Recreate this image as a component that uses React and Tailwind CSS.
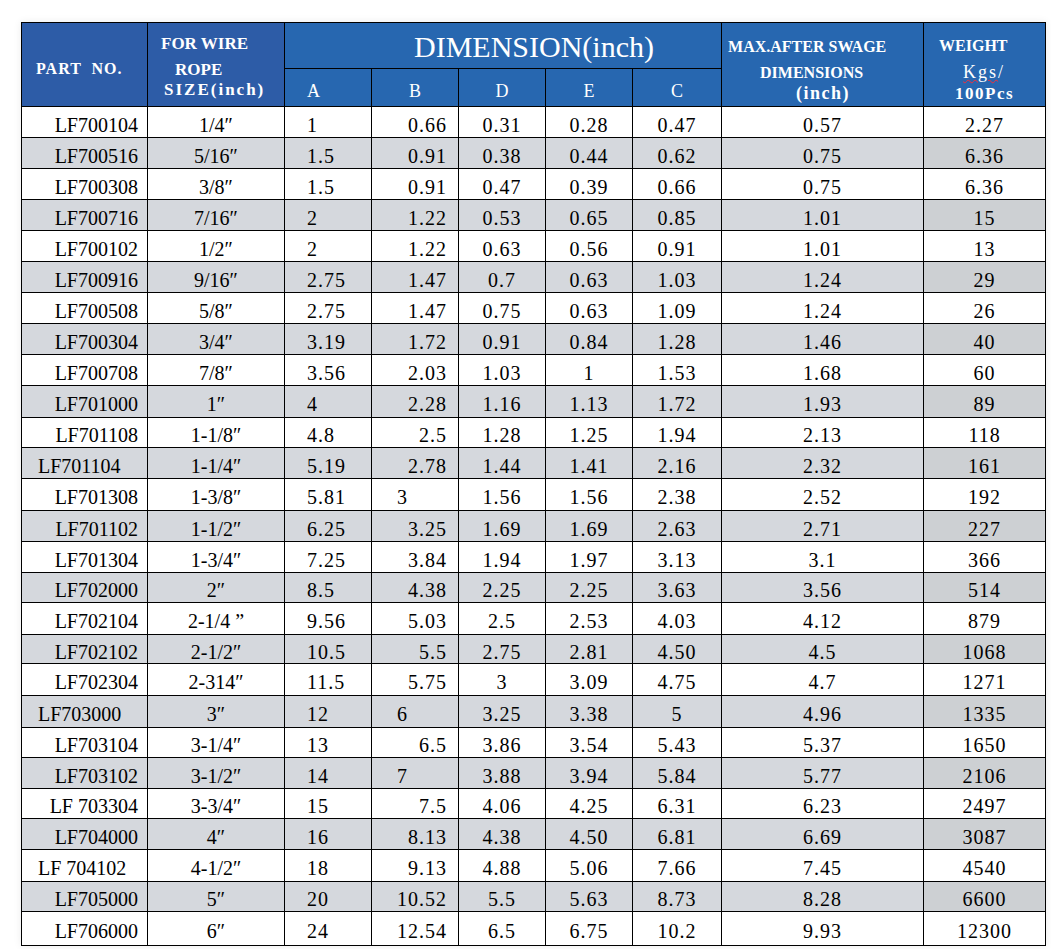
import React from "react";

const rows = [
    ["LF700104", "1/4″", "1", "0.66", "0.31", "0.28", "0.47", "0.57", "2.27", "h-[31px]"],
    ["LF700516", "5/16″", "1.5", "0.91", "0.38", "0.44", "0.62", "0.75", "6.36", "h-[31px]"],
    ["LF700308", "3/8″", "1.5", "0.91", "0.47", "0.39", "0.66", "0.75", "6.36", "h-[31px]"],
    ["LF700716", "7/16″", "2", "1.22", "0.53", "0.65", "0.85", "1.01", "15", "h-[31px]"],
    ["LF700102", "1/2″", "2", "1.22", "0.63", "0.56", "0.91", "1.01", "13", "h-[31px]"],
    ["LF700916", "9/16″", "2.75", "1.47", "0.7", "0.63", "1.03", "1.24", "29", "h-[31px]"],
    ["LF700508", "5/8″", "2.75", "1.47", "0.75", "0.63", "1.09", "1.24", "26", "h-[31px]"],
    ["LF700304", "3/4″", "3.19", "1.72", "0.91", "0.84", "1.28", "1.46", "40", "h-[31px]"],
    ["LF700708", "7/8″", "3.56", "2.03", "1.03", "1", "1.53", "1.68", "60", "h-[31px]"],
    ["LF701000", "1″", "4", "2.28", "1.16", "1.13", "1.72", "1.93", "89", "h-[32px]"],
    ["LF701108", "1-1/8″", "4.8", "2.5", "1.28", "1.25", "1.94", "2.13", "118", "h-[30px]"],
    ["LF701104", "1-1/4″", "5.19", "2.78", "1.44", "1.41", "2.16", "2.32", "161", "h-[31px]"],
    ["LF701308", "1-3/8″", "5.81", "3", "1.56", "1.56", "2.38", "2.52", "192", "h-[32px]"],
    ["LF701102", "1-1/2″", "6.25", "3.25", "1.69", "1.69", "2.63", "2.71", "227", "h-[31px]"],
    ["LF701304", "1-3/4″", "7.25", "3.84", "1.94", "1.97", "3.13", "3.1", "366", "h-[31px]"],
    ["LF702000", "2″", "8.5", "4.38", "2.25", "2.25", "3.63", "3.56", "514", "h-[30px]"],
    ["LF702104", "2-1/4 ”", "9.56", "5.03", "2.5", "2.53", "4.03", "4.12", "879", "h-[32px]"],
    ["LF702102", "2-1/2″", "10.5", "5.5", "2.75", "2.81", "4.50", "4.5", "1068", "h-[29px]"],
    ["LF702304", "2-314″", "11.5", "5.75", "3", "3.09", "4.75", "4.7", "1271", "h-[32px]"],
    ["LF703000", "3″", "12", "6", "3.25", "3.38", "5", "4.96", "1335", "h-[32px]"],
    ["LF703104", "3-1/4″", "13", "6.5", "3.86", "3.54", "5.43", "5.37", "1650", "h-[30px]"],
    ["LF703102", "3-1/2″", "14", "7", "3.88", "3.94", "5.84", "5.77", "2106", "h-[31px]"],
    ["LF 703304", "3-3/4″", "15", "7.5", "4.06", "4.25", "6.31", "6.23", "2497", "h-[30px]"],
    ["LF704000", "4″", "16", "8.13", "4.38", "4.50", "6.81", "6.69", "3087", "h-[31px]"],
    ["LF 704102", "4-1/2″", "18", "9.13", "4.88", "5.06", "7.66", "7.45", "4540", "h-[32px]"],
    ["LF705000", "5″", "20", "10.52", "5.5", "5.63", "8.73", "8.28", "6600", "h-[30px]"],
    ["LF706000", "6″", "24", "12.54", "6.5", "6.75", "10.2", "9.93", "12300", "h-[34px]"],
];

// rows where the part no. / B value sits to the left instead of the right
const partLeft = [11, 19, 24];
const bLeft = [12, 19, 21];

const td = "border border-black p-0 align-middle pt-[5px] leading-[20px]";

export default function App() {
    return (
        <div className="w-[1051px] h-[949px] bg-white pl-[21px] pt-[22px] font-['Liberation_Serif',serif] text-black">
            <table className="table-fixed border-collapse w-[1024px] shadow-[0_0_8px_rgba(0,0,0,0.08)]">
                <colgroup>
                    <col className="w-[126px]" />
                    <col className="w-[137px]" />
                    <col className="w-[87px]" />
                    <col className="w-[87px]" />
                    <col className="w-[87px]" />
                    <col className="w-[87px]" />
                    <col className="w-[89px]" />
                    <col className="w-[202px]" />
                    <col className="w-[122px]" />
                </colgroup>
                <thead className="text-white">
                    <tr className="h-[46px]">
                        <th rowSpan={2} className="border border-black bg-[#2d5ca7] p-0 pl-[14px] pt-[8px] text-left text-[16px] tracking-[1px] font-bold whitespace-pre">
                            {"PART  NO."}
                        </th>
                        <th rowSpan={2} className="border border-black bg-[#2d5ca7] p-0 align-top text-left text-[17px] font-bold leading-[20px]">
                            <div className="pt-[11px] pl-[13px]">FOR WIRE</div>
                            <div className="pt-[6px] pl-[27px]">ROPE</div>
                            <div className="pl-[16px] tracking-[2px]">SIZE(inch)</div>
                        </th>
                        <th colSpan={5} className="border border-black bg-[#2767b0] p-0 pl-[129px] pt-[2px] text-left text-[30px] leading-[36px] font-normal">
                            DIMENSION(inch)
                        </th>
                        <th rowSpan={2} className="border border-black bg-[#2767b0] p-0 align-top text-left text-[16px] font-bold leading-[20px]">
                            <div className="pt-[14px] pl-[6px]">MAX.AFTER SWAGE</div>
                            <div className="pt-[6px] pl-[38px]">DIMENSIONS</div>
                            <div className="pl-[74px] text-[18px] tracking-[1.5px]">(inch)</div>
                        </th>
                        <th rowSpan={2} className="border border-black bg-[#2767b0] p-0 align-top text-left text-[16px] leading-[20px]">
                            <div className="pt-[13px] pl-[15px] font-bold">WEIGHT</div>
                            <div className="pt-[6px] pl-[39px] text-[18px] tracking-[2px] font-normal">
                                <span className="underline decoration-wavy decoration-red-500 decoration-1">Kgs</span>/
                            </div>
                            <div className="pt-[2px] pl-[31px] text-[17px] tracking-[1.5px] font-bold">100Pcs</div>
                        </th>
                    </tr>
                    <tr className="h-[38px] text-[18px] font-normal">
                        <th className="border border-black bg-[#2767b0] p-0 pt-[8px] pl-[22px] text-left font-normal">A</th>
                        <th className="border border-black bg-[#2767b0] p-0 pt-[8px] text-center font-normal">B</th>
                        <th className="border border-black bg-[#2767b0] p-0 pt-[8px] text-center font-normal">D</th>
                        <th className="border border-black bg-[#2767b0] p-0 pt-[8px] text-center font-normal">E</th>
                        <th className="border border-black bg-[#2767b0] p-0 pt-[8px] text-center font-normal">C</th>
                    </tr>
                </thead>
                <tbody className="text-[20px]">
                    {rows.map((r, i) => {
                        const gray = i % 2 === 1;
                        const bg = gray ? "bg-[#d5d8dd]" : "bg-white";
                        const bgW = gray ? "bg-[#cdd0d3]" : "bg-white";
                        return (
                            <tr key={r[0]} className={r[9]}>
                                <td className={`${td} ${bg} whitespace-pre ${partLeft.includes(i) ? "text-left pl-[16px]" : "text-right pr-[9px]"}`}>
                                    {r[0]}
                                </td>
                                <td className={`${td} ${bg} text-center`}>{r[1]}</td>
                                <td className={`${td} ${bg} text-left pl-[22px] tracking-[1px]`}>{r[2]}</td>
                                <td className={`${td} ${bg} tracking-[1px] ${bLeft.includes(i) ? "text-left pl-[25px]" : "text-right pr-[11px]"}`}>
                                    {r[3]}
                                </td>
                                <td className={`${td} ${bg} text-center tracking-[1px]`}>{r[4]}</td>
                                <td className={`${td} ${bg} text-center tracking-[1px]`}>{r[5]}</td>
                                <td className={`${td} ${bg} text-center tracking-[1px]`}>{r[6]}</td>
                                <td className={`${td} ${bg} text-center tracking-[1px]`}>{r[7]}</td>
                                <td className={`${td} ${bgW} text-center tracking-[1px]`}>{r[8]}</td>
                            </tr>
                        );
                    })}
                </tbody>
            </table>
        </div>
    );
}
